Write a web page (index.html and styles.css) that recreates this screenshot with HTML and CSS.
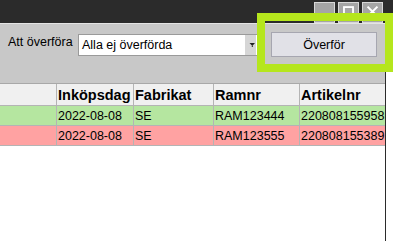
FILE: index.html
```html
<!DOCTYPE html>
<html lang="sv">
<head>
    <meta charset="UTF-8">
    <meta name="viewport" content="width=device-width, initial-scale=1.0">
    <title>Överföring</title>
    <link rel="stylesheet" href="styles.css">
</head>
<body>
    <div class="titlebar">
        <span class="winbtn"></span>
        <span class="winbtn">
            <svg width="21" height="21" viewBox="0 0 21 21"><rect x="5.5" y="4.5" width="10" height="12" fill="none" stroke="#fff" stroke-width="2"/></svg>
        </span>
        <span class="winbtn">
            <svg width="21" height="21" viewBox="0 0 21 21"><path d="M5 4 L16 15 M16 4 L5 15" stroke="#fff" stroke-width="2.2"/></svg>
        </span>
    </div>

    <div class="window">
        <div class="toolbar">
            <label class="label" for="filter">Att överföra</label>
            <div class="combo" id="filter">
                <span class="combo-text">Alla ej överförda</span>
                <span class="combo-arrow">
                    <svg width="11" height="20" viewBox="0 0 11 20"><path d="M4.5 8 H10 L7.25 11 Z M6.8 11 H7.8 V12 H6.8 Z" fill="#222"/></svg>
                </span>
            </div>
            <button class="btn">Överför</button>
        </div>

        <table class="grid">
            <thead>
                <tr>
                    <th class="c0"></th>
                    <th class="c1">Inköpsdag</th>
                    <th class="c2">Fabrikat</th>
                    <th class="c3">Ramnr</th>
                    <th class="c4">Artikelnr</th>
                </tr>
            </thead>
            <tbody>
                <tr class="ok">
                    <td></td>
                    <td>2022-08-08</td>
                    <td>SE</td>
                    <td>RAM123444</td>
                    <td>220808155958</td>
                </tr>
                <tr class="bad">
                    <td></td>
                    <td>2022-08-08</td>
                    <td>SE</td>
                    <td>RAM123555</td>
                    <td>220808155389</td>
                </tr>
            </tbody>
        </table>
    </div>

    <div class="highlight"></div>
</body>
</html>
```

FILE: styles.css
```css
body {
    margin: 0;
    width: 393px;
    height: 241px;
    overflow: hidden;
    background: #fff;
    font-family: "Liberation Sans", Arial, sans-serif;
    font-size: 12px;
    color: #000;
    position: relative;
}
.titlebar {
    height: 23px;
    background: #2b2b2b;
    display: flex;
    justify-content: flex-end;
    gap: 3px;
    padding: 2px 10px 0 0;
    box-sizing: border-box;
}
.winbtn {
    width: 21px;
    height: 21px;
    box-sizing: border-box;
    background: #a5a5a5;
    border: 1px solid #d8d8d8;
    display: flex;
    align-items: center;
    justify-content: center;
}
.winbtn svg { display: block; }
.window {
    width: 385px;
    height: 218px;
    border-right: 1px solid #2b2b2b;
    border-top: 1px solid #e4e4e4;
}
.toolbar {
    height: 60px;
    background: #c8c8c8;
    border-bottom: 1px solid #a8a8a8;
    display: flex;
    align-items: flex-start;
    padding: 8px 0 0 8px;
    box-sizing: border-box;
}
.label {
    width: 70px;
    margin-top: 3px;
    line-height: 14px;
    font-size: 12.5px;
}
.combo {
    width: 180px;
    height: 22px;
    margin-top: 2px;
    box-sizing: border-box;
    background: #fff;
    border: 1px solid #9a9a9a;
    display: flex;
    align-items: center;
}
.combo-text {
    flex: 1;
    padding-left: 3px;
    line-height: 14px;
    font-size: 12.5px;
}
.combo-arrow {
    width: 11px;
    height: 20px;
    background: #d6d6d6;
    margin-right: 1px;
}
.combo-arrow svg { display: block; }
.btn {
    margin-left: 13px;
    width: 106px;
    height: 25px;
    background: #e1e1e7;
    border: 1px solid #a6a6b0;
    font-family: inherit;
    font-size: 12.5px;
    color: #000;
    padding: 0;
}
.grid {
    border-collapse: collapse;
    width: 385px;
    table-layout: fixed;
}
.grid th, .grid td {
    border: 1px solid #b4b4b4;
    padding: 0 0 0 1px;
    text-align: left;
    white-space: nowrap;
    overflow: hidden;
}
.grid tr > :first-child { border-left: none; }
.grid tr > :last-child { border-right: none; }
.grid th {
    height: 21px;
    background: #f0f0f0;
    font-size: 14.5px;
    font-weight: bold;
    border-top: none;
}
.grid td {
    height: 19px;
    font-size: 12.5px;
}
.c0 { width: 55px; }
.c1 { width: 75px; }
.c2 { width: 78px; }
.c3 { width: 84px; }
.ok td { background: #b5e6a0; }
.bad td { background: #ffa2a2; }
.highlight {
    position: absolute;
    left: 257px;
    top: 13px;
    width: 136px;
    height: 59px;
    box-sizing: border-box;
    border: 8px solid #b5e61d;
}
```
